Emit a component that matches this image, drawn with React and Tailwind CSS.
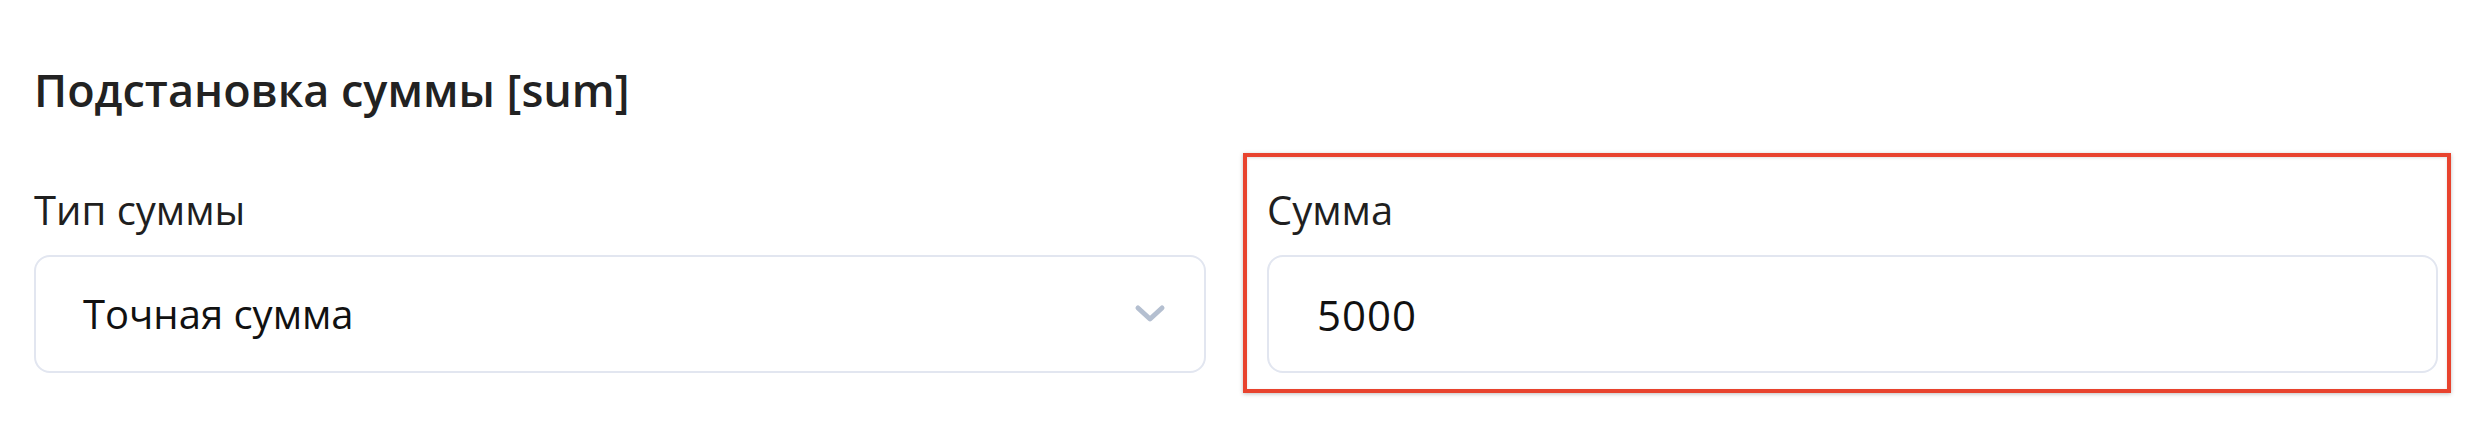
const font = { fontFamily: '"Open Sans", "Noto Sans", sans-serif' };

function Chevron() {
  return (
    <svg width="32" height="20" viewBox="0 0 32 20" fill="none" className="text-[#b4bfd0]">
      <path d="M4 4l12 11 12-11" stroke="currentColor" strokeWidth="5" strokeLinecap="round" strokeLinejoin="round" />
    </svg>
  );
}

export default function App() {
  return (
    <div className="w-[2468px] h-[436px] bg-white text-[#1f1f1f] pl-[34px] pt-[60px]" style={font}>
      <h2 className="text-[45px] leading-[60px] font-semibold text-[#222]">Подстановка суммы [sum]</h2>

      <div className="flex items-end mt-[33px]">
        <div className="w-[1172px] flex flex-col">
          <label className="text-[40px] leading-[48px]">Тип суммы</label>
          <div className="mt-[21px] h-[118px] rounded-[16px] border-2 border-[#e2e6f0] flex items-center pl-[47px] pr-[38px]">
            <span className="flex-1 text-[40px] text-[#111]">Точная сумма</span>
            <Chevron />
          </div>
        </div>

        <div className="ml-[37px] -mb-[20px] border-4 border-[#e8432e] pl-[20px] pr-[9px] pt-[29px] pb-[16px] bg-white shadow-[0_1px_4px_rgba(0,0,0,0.25),inset_0_1px_3px_rgba(0,0,0,0.12)]">
          <div className="w-[1171px] flex flex-col">
            <label className="text-[40px] leading-[48px]">Сумма</label>
            <div className="mt-[21px] h-[118px] rounded-[16px] border-2 border-[#e2e6f0] bg-white flex items-center pl-[48px]">
              <span className="text-[42px] text-[#111] tracking-[1px]">5000</span>
            </div>
          </div>
        </div>
      </div>
    </div>
  );
}
